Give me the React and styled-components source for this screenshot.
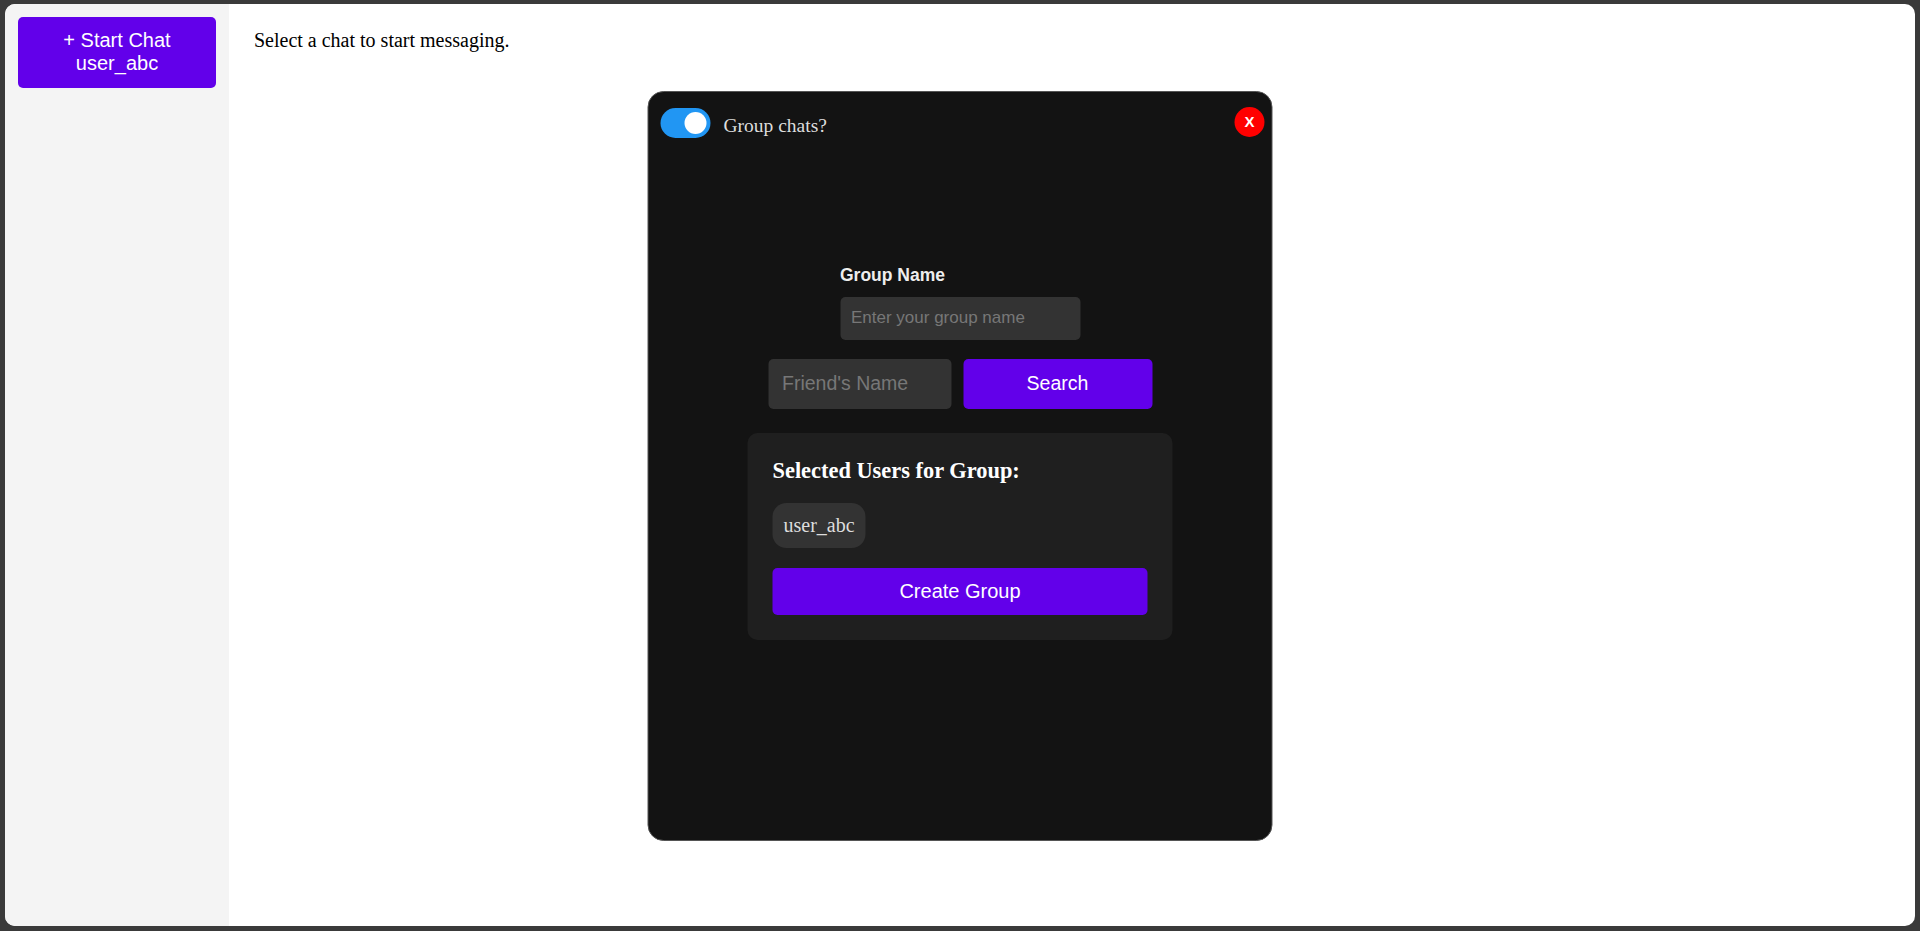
import React, { useState } from 'react';
import styled, { createGlobalStyle } from 'styled-components';

const GlobalStyle = createGlobalStyle`
  html, body {
    margin: 0;
    padding: 0;
  }
  body {
    background: #3a3a3a;
    font-family: "Liberation Serif", "Times New Roman", serif;
  }
  * {
    box-sizing: border-box;
  }
`;

const Frame = styled.div`
  display: flex;
  margin: 4px 5px 5px;
  height: calc(100vh - 9px);
  background: #fff;
  border-radius: 10px;
  overflow: hidden;
`;

const Sidebar = styled.aside`
  width: 224px;
  flex-shrink: 0;
  background: #f4f4f4;
  padding: 13px;
`;

const StartButton = styled.button`
  width: 100%;
  padding: 12px 10px 13px;
  border: none;
  border-radius: 5px;
  background: #6200ea;
  color: #fff;
  font-family: "Liberation Sans", Arial, sans-serif;
  font-size: 20px;
  line-height: 23px;
  cursor: pointer;
`;

const Main = styled.main`
  flex: 1;
  padding: 25px 25px;
`;

const Hint = styled.p`
  margin: 0;
  font-size: 20px;
  color: #000;
`;

const Modal = styled.div`
  position: fixed;
  left: 50%;
  top: 50%;
  transform: translate(-50%, -50%);
  width: 625px;
  height: 750px;
  background: #131313;
  border: 1px solid #555;
  border-radius: 16px;
  padding: 16px 7px 0;
  display: flex;
  flex-direction: column;
`;

const Header = styled.div`
  display: flex;
  align-items: center;
  height: 30px;
  padding-left: 5px;
`;

const Switch = styled.button`
  position: relative;
  width: 50px;
  height: 30px;
  border: none;
  padding: 0;
  border-radius: 15px;
  background: ${(p) => (p.$on ? '#2196f3' : '#666')};
  cursor: pointer;

  &::after {
    content: '';
    position: absolute;
    top: 4px;
    left: ${(p) => (p.$on ? '24px' : '4px')};
    width: 22px;
    height: 22px;
    border-radius: 50%;
    background: #fff;
  }
`;

const SwitchLabel = styled.span`
  margin-left: 13px;
  padding-top: 6px;
  font-size: 19.5px;
  color: #ddd;
`;

const CloseButton = styled.button`
  margin-left: auto;
  margin-top: -2px;
  width: 30px;
  height: 30px;
  border: none;
  border-radius: 50%;
  background: #ff0000;
  color: #fff;
  font-family: "Liberation Sans", Arial, sans-serif;
  font-weight: bold;
  font-size: 15px;
  padding: 0;
  cursor: pointer;
`;

const Body = styled.div`
  display: flex;
  flex-direction: column;
  align-items: center;
  margin-top: 127px;
`;

const Field = styled.div`
  width: 240px;
`;

const FieldLabel = styled.label`
  display: block;
  margin-bottom: 11px;
  font-family: "Liberation Sans", Arial, sans-serif;
  font-weight: bold;
  font-size: 17.5px;
  color: #eee;
`;

const TextInput = styled.input`
  display: block;
  width: ${(p) => p.$width}px;
  height: ${(p) => p.$height}px;
  padding: 0 ${(p) => p.$pad}px;
  border: none;
  border-radius: 5px;
  background: #333;
  color: #fff;
  font-family: "Liberation Sans", Arial, sans-serif;
  font-size: ${(p) => p.$size}px;
  outline: none;

  &::placeholder {
    color: #777;
  }
`;

const SearchRow = styled.div`
  display: flex;
  gap: 12px;
  margin-top: 19px;
`;

const PurpleButton = styled.button`
  width: ${(p) => p.$width};
  height: ${(p) => p.$height}px;
  border: none;
  border-radius: 5px;
  background: #6200ea;
  color: #fff;
  font-family: "Liberation Sans", Arial, sans-serif;
  font-size: ${(p) => p.$size}px;
  cursor: pointer;
`;

const GroupBox = styled.section`
  width: 425px;
  margin-top: 24px;
  padding: 25px;
  background: #1f1f1f;
  border-radius: 10px;
`;

const GroupTitle = styled.h3`
  margin: 0 0 19px;
  font-size: 22.4px;
  font-weight: bold;
  color: #fff;
`;

const ChipList = styled.div`
  display: flex;
  flex-wrap: wrap;
  gap: 8px;
  margin-bottom: 20px;
`;

const Chip = styled.span`
  padding: 11px;
  border-radius: 14px;
  background: #333;
  color: #ddd;
  font-size: 20px;
  line-height: 23px;
`;

export default function App() {
  const [group, setGroup] = useState(true);
  const selected = ['user_abc'];

  return (
    <>
      <GlobalStyle />
      <Frame>
        <Sidebar>
          <StartButton>+ Start Chat user_abc</StartButton>
        </Sidebar>
        <Main>
          <Hint>Select a chat to start messaging.</Hint>
        </Main>
      </Frame>

      <Modal>
        <Header>
          <Switch $on={group} onClick={() => setGroup(!group)} aria-label="toggle group" />
          <SwitchLabel>Group chats?</SwitchLabel>
          <CloseButton>X</CloseButton>
        </Header>

        <Body>
          <Field>
            <FieldLabel>Group Name</FieldLabel>
            <TextInput $width={240} $height={43} $pad={11} $size={17} placeholder="Enter your group name" />
          </Field>

          <SearchRow>
            <TextInput $width={183} $height={50} $pad={14} $size={19.5} placeholder="Friend's Name" />
            <PurpleButton $width="189px" $height={50} $size={19.5}>Search</PurpleButton>
          </SearchRow>

          <GroupBox>
            <GroupTitle>Selected Users for Group:</GroupTitle>
            <ChipList>
              {selected.map((u) => (
                <Chip key={u}>{u}</Chip>
              ))}
            </ChipList>
            <PurpleButton $width="100%" $height={47} $size={20}>Create Group</PurpleButton>
          </GroupBox>
        </Body>
      </Modal>
    </>
  );
}
